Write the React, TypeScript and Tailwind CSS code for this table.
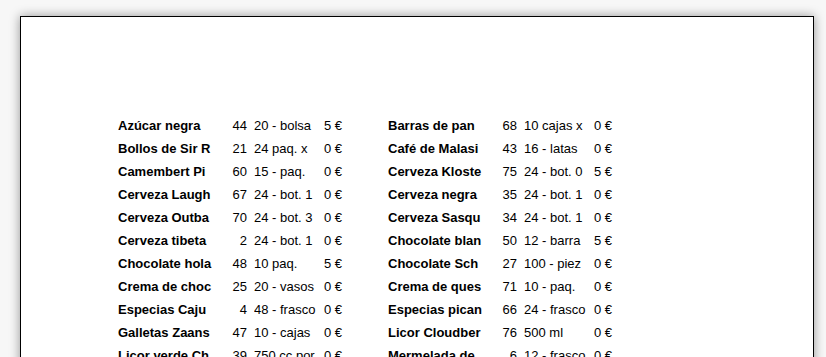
import React from "react";

type Row = { name: string; qty: string; unit: string; price: string };

const left: Row[] = [
  { name: "Azúcar negra", qty: "44", unit: "20 - bolsa", price: "5 €" },
  { name: "Bollos de Sir R", qty: "21", unit: "24 paq. x", price: "0 €" },
  { name: "Camembert Pi", qty: "60", unit: "15 - paq.", price: "0 €" },
  { name: "Cerveza Laugh", qty: "67", unit: "24 - bot. 1", price: "0 €" },
  { name: "Cerveza Outba", qty: "70", unit: "24 - bot. 3", price: "0 €" },
  { name: "Cerveza tibeta", qty: "2", unit: "24 - bot. 1", price: "0 €" },
  { name: "Chocolate hola", qty: "48", unit: "10 paq.", price: "5 €" },
  { name: "Crema de choc", qty: "25", unit: "20 - vasos", price: "0 €" },
  { name: "Especias Caju", qty: "4", unit: "48 - frasco", price: "0 €" },
  { name: "Galletas Zaans", qty: "47", unit: "10 - cajas", price: "0 €" },
  { name: "Licor verde Ch", qty: "39", unit: "750 cc por", price: "0 €" },
];

const right: Row[] = [
  { name: "Barras de pan", qty: "68", unit: "10 cajas x", price: "0 €" },
  { name: "Café de Malasi", qty: "43", unit: "16 - latas", price: "0 €" },
  { name: "Cerveza Kloste", qty: "75", unit: "24 - bot. 0", price: "5 €" },
  { name: "Cerveza negra", qty: "35", unit: "24 - bot. 1", price: "0 €" },
  { name: "Cerveza Sasqu", qty: "34", unit: "24 - bot. 1", price: "0 €" },
  { name: "Chocolate blan", qty: "50", unit: "12 - barra", price: "5 €" },
  { name: "Chocolate Sch", qty: "27", unit: "100 - piez", price: "0 €" },
  { name: "Crema de ques", qty: "71", unit: "10 - paq.", price: "0 €" },
  { name: "Especias pican", qty: "66", unit: "24 - frasco", price: "0 €" },
  { name: "Licor Cloudber", qty: "76", unit: "500 ml", price: "0 €" },
  { name: "Mermelada de", qty: "6", unit: "12 - frasco", price: "0 €" },
];

const ProductRow: React.FC<{ row: Row }> = ({ row }) => (
  <div className="flex h-[23px] items-center leading-[23px] text-[13px] text-black">
    <div className="w-[110px] overflow-hidden whitespace-nowrap font-bold">{row.name}</div>
    <div className="w-[19px] whitespace-nowrap text-right">{row.qty}</div>
    <div className="ml-[7px] w-[66px] overflow-hidden whitespace-nowrap">{row.unit}</div>
    <div className="w-[22px] whitespace-nowrap text-right">{row.price}</div>
  </div>
);

const App: React.FC = () => {
  return (
    <div className="min-h-screen bg-[#f7f7f7] pl-[20px] pt-[16px] font-['Liberation_Sans',Arial,sans-serif]">
      <div className="h-[1100px] w-[794px] border border-black bg-white pl-[97px] pt-[97px] shadow-[0_0_10px_rgba(0,0,0,0.4)]">
        <div className="flex gap-[46px]">
          <div className="flex flex-col">
            {left.map((row, i) => (
              <ProductRow key={i} row={row} />
            ))}
          </div>
          <div className="flex flex-col">
            {right.map((row, i) => (
              <ProductRow key={i} row={row} />
            ))}
          </div>
        </div>
      </div>
    </div>
  );
};

export default App;
